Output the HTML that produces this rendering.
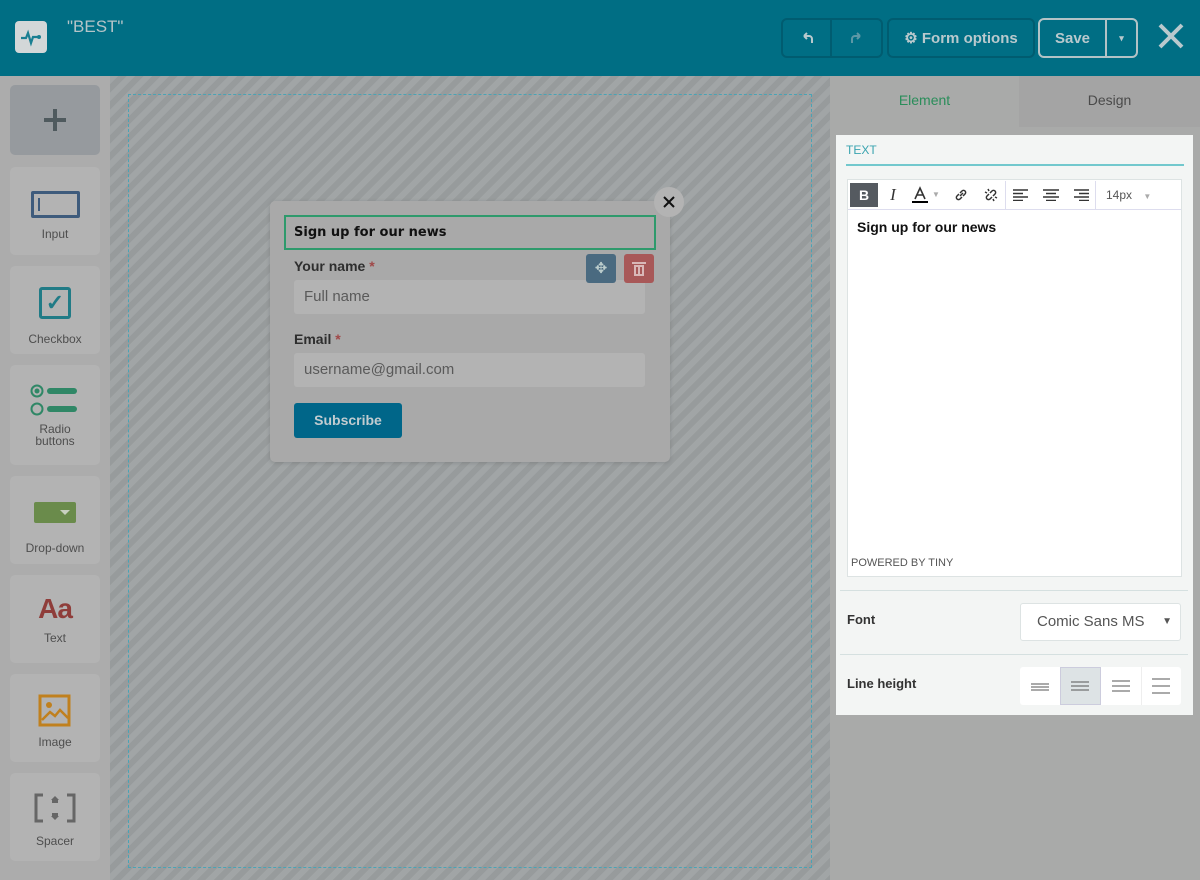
<!DOCTYPE html>
<html><head><style>
*{box-sizing:border-box;margin:0;padding:0}
body{width:1200px;height:880px;overflow:hidden;font-family:"Liberation Sans",sans-serif;background:#a9aaaa;position:relative}
.hdr{position:absolute;left:0;top:0;width:1200px;height:76px;background:#006e84}
.logo{position:absolute;left:15px;top:21px;width:32px;height:32px;background:#d3d7d8;border-radius:4px}
.title{position:absolute;left:67px;top:17px;color:#b5c4c8;font-size:17px}
.btn{position:absolute;top:18px;height:40px;border:2px solid #005c70;border-radius:6px;color:#b9c9cd;font-weight:bold;font-size:15px;display:flex;align-items:center;justify-content:center}
.side{position:absolute;left:0;top:76px;width:110px;height:804px;background:#acacac}
.card{position:absolute;left:10px;width:90px;background:#b3b3b3;border-radius:5px;text-align:center;font-size:12px;color:#4e4e4e}
.canvas{position:absolute;left:110px;top:76px;width:720px;height:804px;background:repeating-linear-gradient(135deg,#a1a5a6 0 6px,#979b9c 6px 12px)}
.dash{position:absolute;left:128px;top:94px;width:684px;height:774px;border:1px dashed #4aa3b5}
.form{position:absolute;left:270px;top:201px;width:400px;height:261px;background:#a9a9a9;border-radius:5px;box-shadow:0 1px 4px rgba(0,0,0,.15)}
.lbl{position:absolute;left:24px;font-size:14px;font-weight:bold;color:#2e2e2e}
.inp{position:absolute;left:24px;width:351px;height:34px;background:#b3b3b3;border-radius:3px;color:#5a5a5a;font-size:15px;padding:8px 10px}
.right{position:absolute;left:830px;top:76px;width:370px;height:804px;background:#a9aaa9}
.panel{position:absolute;left:836px;top:135px;width:357px;height:580px;background:#f3f5f4}
.tb{width:30px;display:flex;align-items:center;justify-content:center;height:28px}
svg{display:block}
</style></head><body>
<div class="hdr">
 <div class="logo"><svg width="32" height="32"><path d="M6 17h5l2-5 3 10 2-6h6" fill="none" stroke="#1a7f92" stroke-width="2.2"/><circle cx="24" cy="16" r="2" fill="#1a7f92"/></svg></div>
 <div class="title">"BEST"</div>
 <div class="btn" style="left:781px;width:102px;justify-content:flex-start">
  <div style="width:50px;height:36px;border-right:2px solid #005c70;display:flex;align-items:center;justify-content:center"><svg width="14" height="14"><path d="M4 5h5a3 3 0 0 1 3 3v4M4 5l3-3M4 5l3 3" fill="none" stroke="#b9c9cd" stroke-width="2"/></svg></div>
  <div style="width:50px;display:flex;align-items:center;justify-content:center"><svg width="14" height="14"><path d="M10 5H5a3 3 0 0 0-3 3v4M10 5L7 2M10 5L7 8" fill="none" stroke="#5d98a6" stroke-width="2"/></svg></div>
 </div>
 <div class="btn" style="left:887px;width:148px">⚙ Form options</div>
 <div class="btn" style="left:1038px;width:100px;border-color:#b3c3c6;justify-content:flex-start">
  <div style="width:67px;height:36px;border-right:2px solid #b3c3c6;display:flex;align-items:center;justify-content:center">Save</div>
  <div style="flex:1;text-align:center;font-size:9px">▾</div>
 </div>
 <div style="position:absolute;left:1157px;top:22px"><svg width="28" height="28"><path d="M3 3l22 22M25 3L3 25" stroke="#b9c9cd" stroke-width="4"/></svg></div>
</div>
<div class="side">
 <div class="card" style="top:9px;height:70px;background:#969a9e"><svg width="24" height="24" style="margin:23px auto 0"><path d="M12 1v22M1 12h22" stroke="#4f5a5e" stroke-width="4"/></svg></div>
 <div class="card" style="top:91px;height:88px"><div style="margin:24px auto 0;width:49px;height:27px;border:3px solid #3e5b7c;border-radius:2px;position:relative"><div style="position:absolute;left:4px;top:4px;width:2px;height:13px;background:#3e5b7c"></div></div><div style="margin-top:9px">Input</div></div>
 <div class="card" style="top:190px;height:88px"><div style="margin:21px auto 0;width:32px;height:32px;border:3px solid #217b86;border-radius:3px;color:#217b86;font-weight:bold;font-size:22px;line-height:26px">✓</div><div style="margin-top:13px">Checkbox</div></div>
 <div class="card" style="top:289px;height:100px"><svg width="50" height="34" style="margin:18px auto 0"><circle cx="7" cy="8" r="5.5" fill="none" stroke="#2f8766" stroke-width="2"/><circle cx="7" cy="8" r="2.5" fill="#2f8766"/><circle cx="7" cy="26" r="5.5" fill="none" stroke="#2f8766" stroke-width="2"/><rect x="17" y="5" width="30" height="6" rx="3" fill="#2f8766"/><rect x="17" y="23" width="30" height="6" rx="3" fill="#2f8766"/></svg><div style="line-height:12px;margin-top:6px">Radio<br>buttons</div></div>
 <div class="card" style="top:400px;height:88px"><div style="margin:26px auto 0;width:42px;height:21px;background:#6a8b4b;border-radius:2px;position:relative"><div style="position:absolute;right:6px;top:8px;border:5px solid transparent;border-top-color:#c8d0c0;border-bottom:0"></div></div><div style="margin-top:18px">Drop-down</div></div>
 <div class="card" style="top:499px;height:88px"><div style="margin-top:18px;font-size:28px;font-weight:bold;color:#8f3d3a;letter-spacing:-1px">Aa</div><div style="margin-top:6px">Text</div></div>
 <div class="card" style="top:598px;height:88px"><svg width="34" height="34" style="margin:20px auto 0"><rect x="2" y="2" width="29" height="29" fill="none" stroke="#c0801e" stroke-width="3"/><circle cx="11" cy="11" r="3" fill="#c0801e"/><path d="M4 26l8-8 5 4 5-6 8 8" fill="none" stroke="#c0801e" stroke-width="2.5"/></svg><div style="margin-top:7px">Image</div></div>
 <div class="card" style="top:697px;height:88px"><svg width="42" height="30" style="margin:20px auto 0"><path d="M9 2H2v26h7M33 2h7v26h-7" fill="none" stroke="#666" stroke-width="3"/><path d="M21 3l4 4h-8zM21 27l4-4h-8z" fill="#666"/><rect x="18" y="6" width="6" height="4" fill="#666"/><rect x="18" y="20" width="6" height="4" fill="#666"/></svg><div style="margin-top:11px">Spacer</div></div>
</div>
<div class="canvas"></div>
<div class="dash"></div>
<div class="form">
 <div style="position:absolute;left:14px;top:14px;width:372px;height:35px;border:2px solid #2e9a6c;font-family:'Comic Sans MS','DejaVu Sans',sans-serif;font-weight:bold;font-size:13px;padding:8px 8px;color:#111">Sign up for our news</div>
 <div class="lbl" style="top:57px">Your name <span style="color:#a04848">*</span></div>
 <div class="inp" style="top:79px">Full name</div>
 <div style="position:absolute;left:316px;top:53px;width:30px;height:29px;background:#4a6a80;border-radius:3px;color:#bcc;text-align:center;line-height:29px;font-size:15px">✥</div>
 <div style="position:absolute;left:354px;top:53px;width:30px;height:29px;background:#a85858;border-radius:3px;display:flex;align-items:center;justify-content:center"><svg width="14" height="16"><rect x="2" y="4" width="10" height="11" fill="#d9b8b8"/><rect x="0" y="1" width="14" height="2" fill="#d9b8b8"/><rect x="4" y="6" width="2" height="7" fill="#a85858"/><rect x="8" y="6" width="2" height="7" fill="#a85858"/></svg></div>
 <div class="lbl" style="top:130px">Email <span style="color:#a04848">*</span></div>
 <div class="inp" style="top:152px">username@gmail.com</div>
 <div style="position:absolute;left:24px;top:202px;width:108px;height:35px;background:#006689;border-radius:3px;color:#c2ccd0;font-weight:bold;font-size:14px;text-align:center;line-height:35px">Subscribe</div>
</div>
<div style="position:absolute;left:654px;top:187px;width:30px;height:30px;border-radius:50%;background:#b3b3b3;display:flex;align-items:center;justify-content:center"><svg width="12" height="12"><path d="M1 1l10 10M11 1L1 11" stroke="#111" stroke-width="2"/></svg></div>
<div class="right">
 <div style="position:absolute;left:0;top:0;width:189px;height:51px;text-align:center;line-height:48px;color:#2a8d5a;font-size:14px">Element</div>
 <div style="position:absolute;left:189px;top:0;width:181px;height:51px;background:#a4a4a4;text-align:center;line-height:48px;color:#4a4a4a;font-size:14px">Design</div>
</div>
<div class="panel">
 <div style="position:absolute;left:10px;top:8px;color:#3aa4b0;font-size:12px">TEXT</div>
 <div style="position:absolute;left:10px;top:29px;width:338px;height:2px;background:#72c8cd"></div>
 <div style="position:absolute;left:11px;top:44px;width:335px;height:398px;background:#fff;border:1px solid #dde3e3">
  <div style="height:30px;border-bottom:1px solid #dde;display:flex;align-items:center;font-size:14px;color:#333">
   <div style="margin-left:2px;width:28px;height:24px;background:#555a60;color:#fff;font-weight:bold;text-align:center;line-height:24px">B</div>
   <div style="width:30px;text-align:center;font-style:italic;font-family:'Liberation Serif',serif;font-size:17px">I</div>
   <div style="width:24px;display:flex;justify-content:center"><svg width="16" height="18"><path d="M3 13L8 2l5 11M5 9h6" fill="none" stroke="#333" stroke-width="1.6"/><rect x="0" y="15" width="16" height="2" fill="#000"/></svg></div><div style="width:14px;font-size:8px;color:#aaa">▼</div>
   <div class="tb"><svg width="16" height="16"><path d="M7 9l3-3M6 7L4 9a2 2 0 0 0 3 3l2-2M10 9l2-2a2 2 0 0 0-3-3L7 6" fill="none" stroke="#333" stroke-width="1.5"/></svg></div>
   <div class="tb" style="border-right:1px solid #dde"><svg width="16" height="16"><path d="M6 7L4 9a2 2 0 0 0 3 3l2-2M10 9l2-2a2 2 0 0 0-3-3L7 6M2 5l2 1M5 2l1 2M14 11l-2-1M11 14l-1-2" fill="none" stroke="#333" stroke-width="1.5"/></svg></div>
   <div class="tb"><svg width="16" height="12"><path d="M0 1h15M0 4.5h10M0 8h15M0 11.5h10" stroke="#333" stroke-width="1.6"/></svg></div>
   <div class="tb"><svg width="16" height="12"><path d="M0 1h16M3 4.5h10M0 8h16M3 11.5h10" stroke="#333" stroke-width="1.6"/></svg></div>
   <div class="tb" style="border-right:1px solid #dde"><svg width="16" height="12"><path d="M1 1h15M6 4.5h10M1 8h15M6 11.5h10" stroke="#333" stroke-width="1.6"/></svg></div>
   <div style="margin-left:10px;font-size:12px;color:#555">14px <span style="color:#aaa;font-size:8px;margin-left:8px">▼</span></div>
  </div>
  <div style="padding:9px 9px;font-weight:bold;font-size:14px;color:#111">Sign up for our news</div>
  <div style="position:absolute;left:3px;bottom:7px;font-size:11px;color:#555">POWERED BY TINY</div>
 </div>
 <div style="position:absolute;left:4px;top:455px;width:348px;height:1px;background:#d5e0e0"></div>
 <div style="position:absolute;left:11px;top:477px;font-size:13px;font-weight:bold;color:#333">Font</div>
 <div style="position:absolute;left:184px;top:468px;width:161px;height:38px;background:#fff;border:1px solid #dde3e3;border-radius:3px;font-size:15px;color:#555;padding:9px 16px">Comic Sans MS<span style="position:absolute;right:8px;top:12px;font-size:10px">▼</span></div>
 <div style="position:absolute;left:4px;top:519px;width:348px;height:1px;background:#d5e0e0"></div>
 <div style="position:absolute;left:11px;top:541px;font-size:13px;font-weight:bold;color:#333">Line height</div>
 <div style="position:absolute;left:184px;top:532px;width:161px;height:38px;background:#fff;border-radius:3px;display:flex">
  <div style="flex:1;display:flex;align-items:center;justify-content:center"><svg width="18" height="10"><path d="M0 3h18M0 6h18M0 9h18" stroke="#555"/></svg></div>
  <div style="flex:1;background:#dde3e5;border:1px solid #ccd;display:flex;align-items:center;justify-content:center"><svg width="18" height="12"><path d="M0 2h18M0 6h18M0 10h18" stroke="#555"/></svg></div>
  <div style="flex:1;border-right:1px solid #eee;display:flex;align-items:center;justify-content:center"><svg width="18" height="14"><path d="M0 2h18M0 7h18M0 12h18" stroke="#555"/></svg></div>
  <div style="flex:1;display:flex;align-items:center;justify-content:center"><svg width="18" height="18"><path d="M0 2h18M0 9h18M0 16h18" stroke="#555"/></svg></div>
 </div>
</div>
</body></html>
